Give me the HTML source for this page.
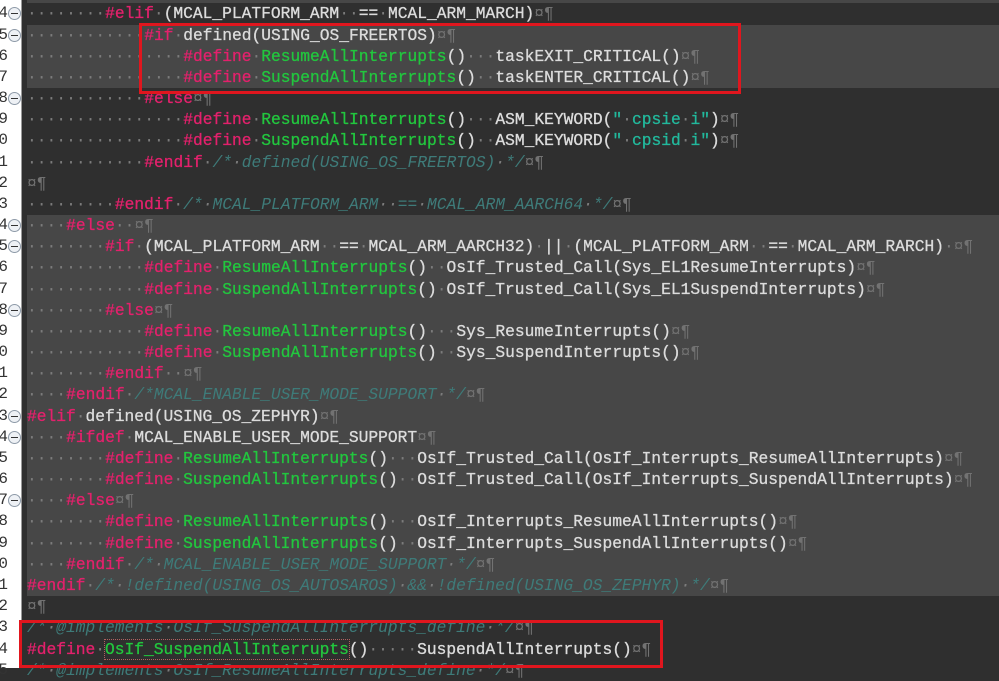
<!DOCTYPE html>
<html><head><meta charset="utf-8"><style>
html,body{margin:0;padding:0;width:999px;height:668px;overflow:hidden;background:#2f2f2f}
#g{position:absolute;left:0;top:0;width:22px;height:668px;background:#fff;border-right:1px solid #9a9a9a;box-sizing:border-box}
.row{position:absolute;left:0;width:999px;height:21.17px}
.bg{position:absolute;left:27px;right:0;top:0;bottom:0;background:#474747}
.num{position:absolute;left:-4px;width:12px;text-align:right;font:16px "Liberation Mono",monospace;color:#333;line-height:21px;overflow:hidden}
.fold{position:absolute;left:8px;top:4px;width:11px;height:11px;border:1px solid #8e9aa8;border-radius:50%;background:#eef1f5}
.fold:after{content:"";position:absolute;left:2px;top:5px;width:7px;height:1px;background:#333}
.t{position:absolute;left:27px;top:0;white-space:pre;font:16.25px "Liberation Mono",monospace;line-height:21.17px;color:#dcdcdc;-webkit-text-stroke:0.3px currentColor}
.k{color:#e3216c}.gr{color:#22c63e}.c{color:#3e7b79;font-style:italic;-webkit-text-stroke:0}.s{color:#22b89c}
.d{color:#7c7c7c;-webkit-text-stroke:0}.p{color:#727272;-webkit-text-stroke:0}
.box{position:absolute;border:3px solid #e0161e;box-sizing:border-box}
.dot{outline:1px dotted #b06060}
</style></head><body>
<div id="g"></div>
<div id="ed"></div>
<div class="box" style="left:139px;top:23px;width:602px;height:71px"></div>
<div class="box" style="left:19px;top:620px;width:644px;height:48px"></div>
<script>
var L=[
['········<span class=k>#elif</span>·(MCAL_PLATFORM_ARM··==·MCAL_ARM_MARCH)¤¶',0,1],
['············<span class=k>#if</span>·defined(USING_OS_FREERTOS)¤¶',1,1],
['················<span class=k>#define</span>·<span class=gr>ResumeAllInterrupts</span>()···taskEXIT_CRITICAL()¤¶',1,0],
['················<span class=k>#define</span>·<span class=gr>SuspendAllInterrupts</span>()··taskENTER_CRITICAL()¤¶',1,0],
['············<span class=k>#else</span>¤¶',0,1],
['················<span class=k>#define</span>·<span class=gr>ResumeAllInterrupts</span>()···ASM_KEYWORD(<span class=s>"·cpsie·i"</span>)¤¶',0,0],
['················<span class=k>#define</span>·<span class=gr>SuspendAllInterrupts</span>()··ASM_KEYWORD(<span class=s>"·cpsid·i"</span>)¤¶',0,0],
['············<span class=k>#endif</span>·<span class=c>/*·defined(USING_OS_FREERTOS)·*/</span>¤¶',0,0],
['¤¶',0,0],
['·········<span class=k>#endif</span>·<span class=c>/*·MCAL_PLATFORM_ARM··==·MCAL_ARM_AARCH64·*/</span>¤¶',0,0],
['····<span class=k>#else</span>··¤¶',1,1],
['········<span class=k>#if</span>·(MCAL_PLATFORM_ARM··==·MCAL_ARM_AARCH32)·||·(MCAL_PLATFORM_ARM··==·MCAL_ARM_RARCH)·¤¶',1,1],
['············<span class=k>#define</span>·<span class=gr>ResumeAllInterrupts</span>()··OsIf_Trusted_Call(Sys_EL1ResumeInterrupts)¤¶',1,0],
['············<span class=k>#define</span>·<span class=gr>SuspendAllInterrupts</span>()·OsIf_Trusted_Call(Sys_EL1SuspendInterrupts)¤¶',1,0],
['········<span class=k>#else</span>¤¶',1,1],
['············<span class=k>#define</span>·<span class=gr>ResumeAllInterrupts</span>()···Sys_ResumeInterrupts()¤¶',1,0],
['············<span class=k>#define</span>·<span class=gr>SuspendAllInterrupts</span>()··Sys_SuspendInterrupts()¤¶',1,0],
['········<span class=k>#endif</span>··¤¶',1,0],
['····<span class=k>#endif</span>·<span class=c>/*MCAL_ENABLE_USER_MODE_SUPPORT·*/</span>¤¶',1,0],
['<span class=k>#elif</span>·defined(USING_OS_ZEPHYR)¤¶',1,1],
['····<span class=k>#ifdef</span>·MCAL_ENABLE_USER_MODE_SUPPORT¤¶',1,1],
['········<span class=k>#define</span>·<span class=gr>ResumeAllInterrupts</span>()···OsIf_Trusted_Call(OsIf_Interrupts_ResumeAllInterrupts)¤¶',1,0],
['········<span class=k>#define</span>·<span class=gr>SuspendAllInterrupts</span>()··OsIf_Trusted_Call(OsIf_Interrupts_SuspendAllInterrupts)¤¶',1,0],
['····<span class=k>#else</span>¤¶',1,1],
['········<span class=k>#define</span>·<span class=gr>ResumeAllInterrupts</span>()···OsIf_Interrupts_ResumeAllInterrupts()¤¶',1,0],
['········<span class=k>#define</span>·<span class=gr>SuspendAllInterrupts</span>()··OsIf_Interrupts_SuspendAllInterrupts()¤¶',1,0],
['····<span class=k>#endif</span>·<span class=c>/*·MCAL_ENABLE_USER_MODE_SUPPORT·*/</span>¤¶',1,0],
['<span class=k>#endif</span>·<span class=c>/*·!defined(USING_OS_AUTOSAROS)·&amp;&amp;·!defined(USING_OS_ZEPHYR)·*/</span>¤¶',1,0],
['¤¶',0,0],
['<span class=c>/*·@implements·OsIf_SuspendAllInterrupts_define·*/</span>¤¶',0,0],
['<span class=k>#define</span>·<span class="gr dot">OsIf_SuspendAllInterrupts</span>()·····SuspendAllInterrupts()¤¶',0,0],
['<span class=c>/*·@implements·OsIf_ResumeAllInterrupts_define·*/</span>¤¶',0,0]
];
var h='<div class=row style="top:-17.77px"><div class=bg></div></div>';
for(var i=0;i<L.length;i++){
 var s=L[i][0].replace(/¤¶/g,'<span class=p>¤¶</span>');
 s=s.replace(/·(?![^<]*>)/g,'<span class=d>·</span>');
 h+='<div class=row style="top:'+(3.4+i*21.17)+'px">'+(L[i][1]?'<div class=bg></div>':'')+
 '<div class=num>'+((4+i)%10)+'</div>'+(L[i][2]?'<div class=fold></div>':'')+'<div class=t>'+s+'</div></div>';
}
document.getElementById('ed').innerHTML=h;
</script>
</body></html>
